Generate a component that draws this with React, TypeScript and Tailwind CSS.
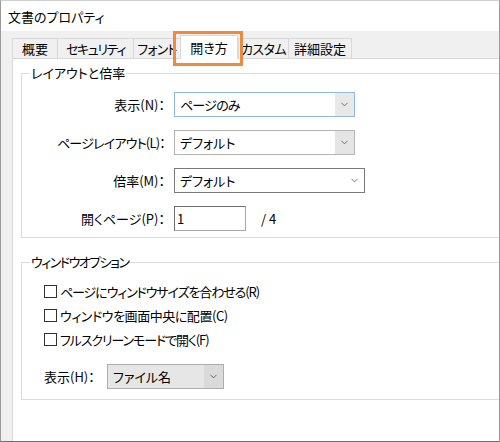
import { ChevronDown } from "lucide-react"

const tabs = [
    { name: "概要", w: "w-[45px]", t: "" },
    { name: "セキュリティ", w: "w-[76px]", t: "tracking-[-1.4px]" },
    { name: "フォント", w: "w-[47px]", t: "tracking-[-0.8px]" },
    { name: "開き方", w: "w-[58px]", t: "" },
    { name: "カスタム", w: "w-[50px]", t: "tracking-[-0.6px]" },
    { name: "詳細設定", w: "w-[64px]", t: "" },
]

type SelectProps = {
    value: string
    width: string
    variant: "focus" | "flat" | "plain" | "gray"
    tight?: string
}

const Select = ({ value, width, variant, tight = "" }: SelectProps) => {
    let box = "border border-[#b4b4b4] bg-white"
    let arrow = "bg-[#e5e5e5]"
    if (variant === "focus") {
        box = "border border-[#8fb8e0] bg-white"
        arrow = "bg-[#e8e8e8]"
    }
    if (variant === "plain") {
        box = "border border-[#7a7a7a] bg-white"
        arrow = "bg-white"
    }
    if (variant === "gray") {
        box = "border border-[#adadad] bg-[#e6e6e6]"
        arrow = "bg-[#dadada]"
    }
    return (
        <div className={`${width} h-[25px] flex items-stretch ${box}`}>
            <div className={`flex-1 flex items-center pl-[5px] text-[13px] ${tight}`}>{value}</div>
            <div className={`w-[19px] flex items-center justify-center ${arrow}`}>
                <ChevronDown size={11} strokeWidth={1.6} className="text-[#444]" />
            </div>
        </div>
    )
}

const Checkbox = ({ label, tight }: { label: string; tight: string }) => (
    <div className="h-[16px] flex items-center gap-[3px]">
        <div className="w-[13px] h-[13px] border border-[#333] bg-white" />
        <span className={`text-[13px] ${tight}`}>{label}</span>
    </div>
)

const App = () => {
    return (
        <div className="w-[500px] h-[442px] overflow-hidden border border-[#9a9a9a] border-b-[#6e6e6e] border-t-[#cfcfcf] bg-[#f0f0f0] flex flex-col text-black font-['Noto_Sans_CJK_JP','Noto_Sans',sans-serif] [font-feature-settings:'palt'] leading-none">
            <div className="h-[30px] bg-white flex items-center pl-[7px] text-[13px]">文書のプロパティ</div>

            <div className="flex-1 flex flex-col pl-[11px] pt-[7px]">
                <div className="h-[20px] flex items-end">
                    {tabs.map((tab) =>
                        tab.name === "開き方" ? (
                            <div key={tab.name} className={`relative z-10 -mb-px ${tab.w} h-[24px] flex items-center justify-center bg-white border border-b-0 border-[#d9d9d9] text-[13px]`}>
                                {tab.name}
                                <div className="absolute -left-[8px] -right-[6px] -top-[5px] h-[35px] border-[3px] border-[#f08a3b]" />
                            </div>
                        ) : (
                            <div key={tab.name} className={`${tab.w} h-[20px] flex items-center justify-center border border-b-0 border-r-0 border-[#d9d9d9] text-[13px] last:border-r ${tab.t}`}>
                                {tab.name}
                            </div>
                        )
                    )}
                </div>

                <div className="flex-1 bg-white border-t border-l border-[#d9d9d9] pl-[8px] pt-[14px]">
                    <div className="relative h-[165px] border border-r-0 border-[#dcdcdc] pt-[18px]">
                        <div className="absolute left-[8px] -top-[8px] bg-white px-[1px] text-[13px]">レイアウトと倍率</div>
                        <div className="flex flex-col gap-[13px]">
                            <div className="flex items-center gap-[9px]">
                                <div className="w-[143px] text-right text-[13px]">表示(N)：</div>
                                <Select value="ページのみ" width="w-[181px]" variant="focus" tight="tracking-[-0.8px]" />
                            </div>
                            <div className="flex items-center gap-[9px]">
                                <div className="w-[143px] text-right text-[13px] tracking-[-0.8px]">ページレイアウト(L)：</div>
                                <Select value="デフォルト" width="w-[181px]" variant="flat" />
                            </div>
                            <div className="flex items-center gap-[9px]">
                                <div className="w-[143px] text-right text-[13px]">倍率(M)：</div>
                                <Select value="デフォルト" width="w-[191px]" variant="plain" />
                            </div>
                            <div className="flex items-center gap-[9px]">
                                <div className="w-[143px] text-right text-[13px]">開くページ(P)：</div>
                                <div className="w-[72px] h-[25px] border border-[#a8a8a8] border-t-[#6d6d6d] border-l-[#6d6d6d] flex items-center pl-[2px] text-[13px]">1</div>
                                <span className="ml-[6px] text-[13px]">/ 4</span>
                            </div>
                        </div>
                    </div>

                    <div className="relative mt-[24px] h-[138px] border border-r-0 border-[#dcdcdc] pt-[20px] pl-[22px]">
                        <div className="absolute left-[8px] -top-[8px] bg-white px-[1px] text-[13px] tracking-[-1.5px]">ウィンドウオプション</div>
                        <div className="flex flex-col gap-2">
                            <Checkbox label="ページにウィンドウサイズを合わせる(R)" tight="tracking-[-1.1px]" />
                            <Checkbox label="ウィンドウを画面中央に配置(C)" tight="tracking-[-0.45px]" />
                            <Checkbox label="フルスクリーンモードで開く(F)" tight="tracking-[-1.1px]" />
                        </div>
                        <div className="mt-[17px] flex items-center">
                            <div className="w-[63px] text-[13px]">表示(H)：</div>
                            <Select value="ファイル名" width="w-[117px]" variant="gray" />
                        </div>
                    </div>
                </div>
            </div>
        </div>
    )
}

export default App
